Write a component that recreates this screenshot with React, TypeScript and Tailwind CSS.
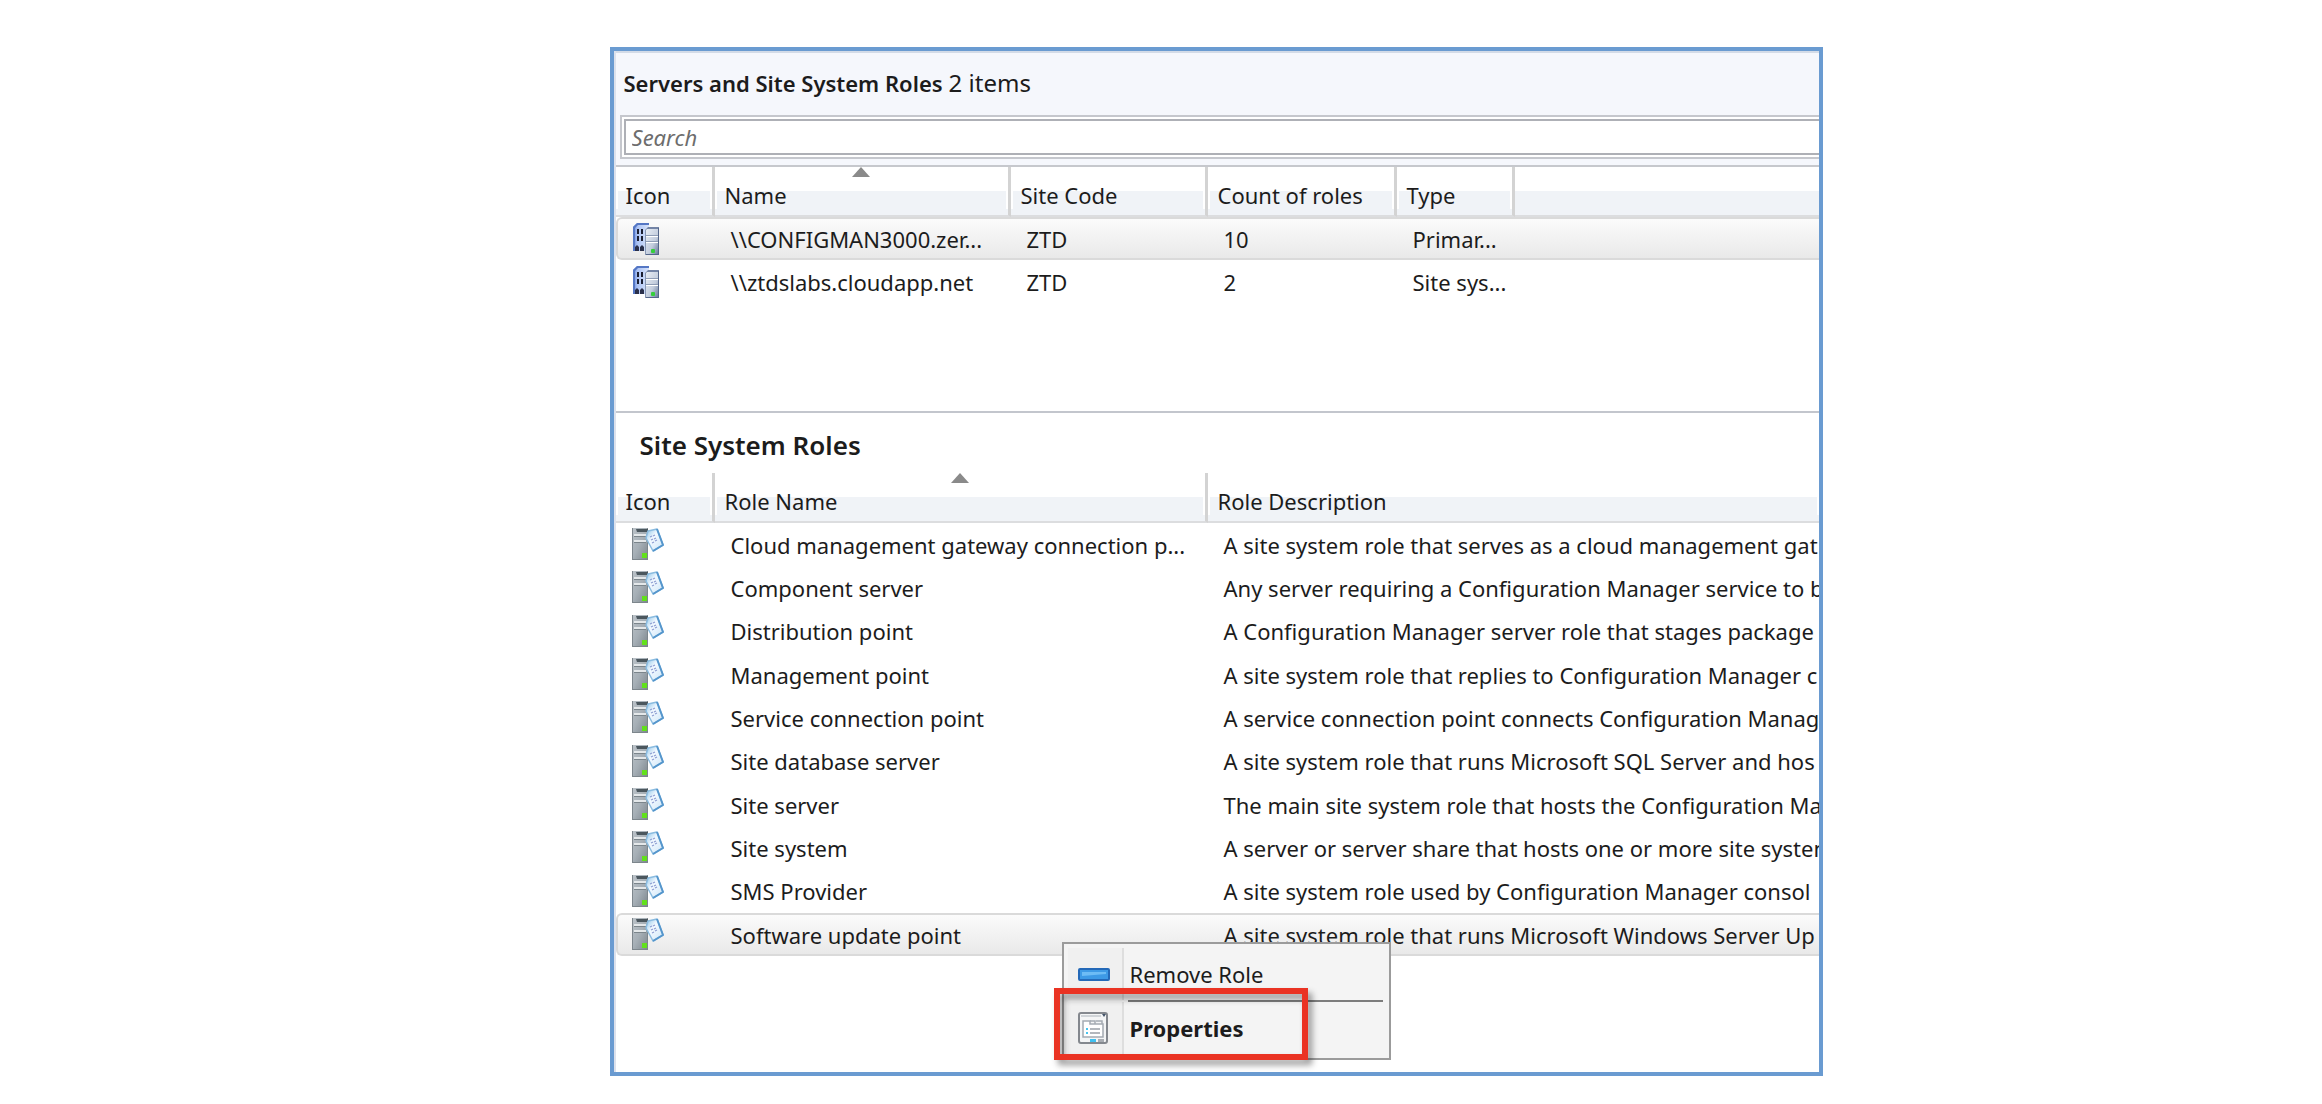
import type { ReactNode } from "react";

type Server = { name: string; code: string; count: string; type: string };
type Role = { name: string; description: string };

const servers: Server[] = [
  { name: "\\\\CONFIGMAN3000.zer...", code: "ZTD", count: "10", type: "Primar..." },
  { name: "\\\\ztdslabs.cloudapp.net", code: "ZTD", count: "2", type: "Site sys..." },
];

const roles: Role[] = [
  { name: "Cloud management gateway connection p...", description: "A site system role that serves as a cloud management gat" },
  { name: "Component server", description: "Any server requiring a Configuration Manager service to b" },
  { name: "Distribution point", description: "A Configuration Manager server role that stages package" },
  { name: "Management point", description: "A site system role that replies to Configuration Manager c" },
  { name: "Service connection point", description: "A service connection point connects Configuration Manag" },
  { name: "Site database server", description: "A site system role that runs Microsoft SQL Server and hos" },
  { name: "Site server", description: "The main site system role that hosts the Configuration Ma" },
  { name: "Site system", description: "A server or server share that hosts one or more site system" },
  { name: "SMS Provider", description: "A site system role used by Configuration Manager consol" },
  { name: "Software update point", description: "A site system role that runs Microsoft Windows Server Up" },
];

function ServerIcon() {
  return (
    <svg width="28" height="34" viewBox="0 0 28 34" aria-hidden="true">
      <defs>
        <linearGradient id="tower" x1="0" y1="0" x2="1" y2="0">
          <stop offset="0" stopColor="#5c82d6" />
          <stop offset="0.25" stopColor="#a9c1f4" />
          <stop offset="1" stopColor="#dbe6fb" />
        </linearGradient>
        <linearGradient id="unit" x1="0" y1="0" x2="1" y2="1">
          <stop offset="0" stopColor="#eef2f8" />
          <stop offset="0.6" stopColor="#c3cddd" />
          <stop offset="1" stopColor="#5f7194" />
        </linearGradient>
      </defs>
      <path d="M1 5 5 1h12v28H1z" fill="url(#tower)" />
      <path d="M1 5 5 1h12v2H6L3 6v23H1z" fill="#5577c4" />
      <path d="M5 7h2v5H5zM9 7h2v5H9zM5 14h2v5H5zM9 14h2v5H9z" fill="#1a1e30" />
      <path d="M3 29v-4l2-2 2 2v4zM8 29v-4l2-2 2 2v4z" fill="#2a304a" />
      <path d="M13 8 16 5h11v28H13z" fill="url(#unit)" />
      <path d="M16 5h11v2H15l-2 2V8z" fill="#7384a6" />
      <path d="M26 6h1v27H13v-1h13z" fill="#546689" />
      <path d="M13 8h1v25h-1z" fill="#8797b3" />
      <path d="M14 13h12v1H14zM14 19h12v1H14z" fill="#8f9db6" />
      <path d="M14 14h12v1H14zM14 20h12v1H14z" fill="#fff" />
      <rect x="19" y="27" width="4" height="4" rx="1" fill="#35cf3c" />
    </svg>
  );
}

function RoleIcon() {
  return (
    <svg width="32" height="33" viewBox="0 0 32 33" aria-hidden="true">
      <defs>
        <linearGradient id="case" x1="0" y1="0" x2="1" y2="1">
          <stop offset="0" stopColor="#bcc3c9" />
          <stop offset="0.5" stopColor="#a6afb6" />
          <stop offset="1" stopColor="#7b848b" />
        </linearGradient>
        <linearGradient id="sheet" x1="0" y1="0" x2="1" y2="1">
          <stop offset="0" stopColor="#8cc3e8" />
          <stop offset="0.4" stopColor="#f2f9ff" />
          <stop offset="1" stopColor="#cfe6f7" />
        </linearGradient>
      </defs>
      <path d="M0 0h16v32H0z" fill="url(#case)" />
      <path d="M0 0h1v32H0zM15 0h1v32h-1zM0 31h16v1H0z" fill="#7d868c" />
      <path d="M4 1h12v3H5z" fill="#4b575e" />
      <path d="M2 6h12v2H2zM2 12h12v2H2z" fill="#e4e8ea" />
      <path d="M2 8h12v1H2zM2 14h12v1H2z" fill="#7b858b" />
      <path d="M10 25h5v5h-5z" fill="#62e01c" />
      <path d="M16 3 25 1l6 16-10 6-7-13z" fill="url(#sheet)" stroke="#8bbce0" strokeWidth="1.5" strokeLinejoin="round" />
      <path d="M25 1 31 17 21 23" fill="none" stroke="#5596cc" strokeWidth="2" strokeLinejoin="round" />
      <path d="m18 9 2-1m1 0 2-1m-4 5 2-1m1 0 2-1m-4 5 2-1m1-1 2-1" stroke="#8d9dd2" strokeWidth="1.2" />
    </svg>
  );
}

function RemoveIcon() {
  return (
    <svg width="32" height="13" viewBox="0 0 32 13" aria-hidden="true">
      <rect x="1" y="1" width="30" height="11" rx="1" fill="#3d9ae6" stroke="#2469b8" strokeWidth="2" />
      <path d="M4 4h24v2L4 8z" fill="#6dbcf5" />
    </svg>
  );
}

function PropertiesIcon() {
  return (
    <svg width="31" height="32" viewBox="0 0 31 32" aria-hidden="true">
      <rect x="1" y="1" width="28" height="30" rx="2" fill="#f4f5f6" stroke="#84888e" strokeWidth="2" />
      <path d="M3 4h20" stroke="#c5c9ce" strokeWidth="1.5" />
      <path d="M24 2h4l-2 3z" fill="#44546a" />
      <path d="M5 9h7v3h13v13H5z" fill="#fff" stroke="#a4aab3" strokeWidth="1.5" />
      <path d="M12 9h5v3M18 9h6v3" fill="none" stroke="#a4aab3" strokeWidth="1.5" />
      <path d="M12 17h10M12 21h10" stroke="#9aa0a8" strokeWidth="1.5" />
      <path d="M8 16h2v2H8zM8 20h2v2H8z" fill="#46c3ee" />
      <path d="M12 27h6v3h-6z" fill="#3fc0f0" />
      <path d="M20 27h6v3h-6z" fill="#a9adb3" />
    </svg>
  );
}

function SortArrow() {
  return (
    <svg className="absolute inset-x-0 top-0 mx-auto" width="18" height="10" viewBox="0 0 18 10" aria-hidden="true">
      <path d="M9 0l9 10H0z" fill="#8a8a8a" />
    </svg>
  );
}

function HeaderCell({ children, sorted, last }: { children?: ReactNode; sorted?: boolean; last?: boolean }) {
  return (
    <th
      scope="col"
      aria-sort={sorted ? "ascending" : undefined}
      className={
        "relative border-b-2 border-b-[#dcdddf] bg-[linear-gradient(#ffffff_50%,#f0f3f7_50%)] p-0 text-left font-normal " +
        (last ? "" : "border-r-3 border-r-[#d3d3d3]")
      }
    >
      {children && (
        <button type="button" className="block w-full border-x-2 border-white pt-2 pl-2 text-left">
          {children}
        </button>
      )}
      {sorted && <SortArrow />}
    </th>
  );
}

function Cell({ children, selected, first }: { children?: ReactNode; selected?: boolean; first?: boolean }) {
  return (
    <td
      className={
        "overflow-hidden p-0 whitespace-nowrap " +
        (selected ? "border-y-2 border-[#dadada] bg-linear-to-b from-[#fbfbfb] to-[#e9e9e9] " : "") +
        (selected && first ? "rounded-l-md border-l-2 pl-3.5" : "pl-4")
      }
    >
      {children}
    </td>
  );
}

export default function App() {
  return (
    <div className="min-h-screen bg-white pt-[47px] pr-[21.5%] pl-[26.25%] font-['Noto_Sans','Open_Sans',sans-serif] text-[22px] leading-7 text-[#1c1c1c]">
      <main className="overflow-hidden border-4 border-[#6a9bd1] bg-white">
        <div className="border-l-2 border-[#dce1ec]">
          <header className="border-t-2 border-[#d3dbe7] bg-[#f5f7fc]">
            <div className="flex h-15 items-center gap-1.5 pl-2">
              <h1 className="text-[22px] font-semibold">Servers and Site System Roles</h1>
              <span className="text-[24px]">2 items</span>
            </div>
            <div className="mt-0.5 ml-1 border-2 border-r-0 border-[#c5c7cd] bg-white p-0.5 pr-0">
              <input
                type="text"
                aria-label="Search"
                placeholder="Search"
                className="block h-9 w-full border-2 border-r-0 border-[#aeb0b6] bg-white pl-1.5 text-[22px] italic placeholder:text-[#6d6d6d]"
              />
            </div>
            <div className="h-1.5" />
          </header>

          <section aria-label="Servers" className="border-t-2 border-[#c6c8cd] pb-27">
            <table className="w-full table-fixed border-separate border-spacing-0">
              <colgroup>
                <col className="w-[99px]" />
                <col className="w-[296px]" />
                <col className="w-[197px]" />
                <col className="w-[189px]" />
                <col className="w-[118px]" />
                <col />
              </colgroup>
              <thead>
                <tr className="h-[50px]">
                  <HeaderCell>Icon</HeaderCell>
                  <HeaderCell sorted>Name</HeaderCell>
                  <HeaderCell>Site Code</HeaderCell>
                  <HeaderCell>Count of roles</HeaderCell>
                  <HeaderCell>Type</HeaderCell>
                  <HeaderCell last />
                </tr>
              </thead>
              <tbody>
                {servers.map((s, i) => (
                  <tr key={s.name} className="h-[43px]">
                    <Cell first selected={i === 0}>
                      <ServerIcon />
                    </Cell>
                    <Cell selected={i === 0}>{s.name}</Cell>
                    <Cell selected={i === 0}>{s.code}</Cell>
                    <Cell selected={i === 0}>{s.count}</Cell>
                    <Cell selected={i === 0}>{s.type}</Cell>
                    <Cell selected={i === 0} />
                  </tr>
                ))}
              </tbody>
            </table>
          </section>

          <section className="relative border-t-2 border-[#c3c6cd]">
            <h2 className="flex h-15 items-center pt-1 pl-6 text-[26px] font-semibold">Site System Roles</h2>
            <table className="w-full table-fixed border-separate border-spacing-0">
              <colgroup>
                <col className="w-[99px]" />
                <col className="w-[493px]" />
                <col />
              </colgroup>
              <thead>
                <tr className="h-[50px]">
                  <HeaderCell>Icon</HeaderCell>
                  <HeaderCell sorted>Role Name</HeaderCell>
                  <HeaderCell last>Role Description</HeaderCell>
                </tr>
              </thead>
              <tbody>
                {roles.map((r, i) => {
                  const selected = i === roles.length - 1;
                  return (
                    <tr key={r.name} className="h-[43px] [&:nth-child(3n)]:h-11">
                      <Cell first selected={selected}>
                        <RoleIcon />
                      </Cell>
                      <Cell selected={selected}>{r.name}</Cell>
                      <Cell selected={selected}>{r.description}</Cell>
                    </tr>
                  );
                })}
              </tbody>
            </table>

            <div
              role="menu"
              className="absolute top-full left-[446px] -mt-3.5 w-[329px] border-2 border-[#9b9b9b] bg-[#f4f4f4] p-1"
            >
              <button type="button" role="menuitem" className="flex h-[52px] w-full items-center">
                <span className="flex h-full w-14 shrink-0 items-center border-r-2 border-[#dedede] bg-[#f0f0f0] pl-2.5">
                  <RemoveIcon />
                </span>
                <span className="pl-1.5">Remove Role</span>
              </button>
              <div role="separator" className="mr-0.5 ml-15 h-0.5 bg-[#7d7d7d]" />
              <button type="button" role="menuitem" className="flex h-[52px] w-full items-center font-bold">
                <span className="flex h-full w-14 shrink-0 items-center border-r-2 border-[#dedede] bg-[#f0f0f0] pl-2.5">
                  <PropertiesIcon />
                </span>
                <span className="pl-1.5">Properties</span>
              </button>
              <div className="pointer-events-none absolute -bottom-0.5 -left-2.5 h-[72px] w-[254px] border-6 border-[#ea3323] drop-shadow-[4px_5px_3px_rgba(0,0,0,0.4)]" />
            </div>
          </section>
          <div className="h-29" />
        </div>
      </main>
    </div>
  );
}
